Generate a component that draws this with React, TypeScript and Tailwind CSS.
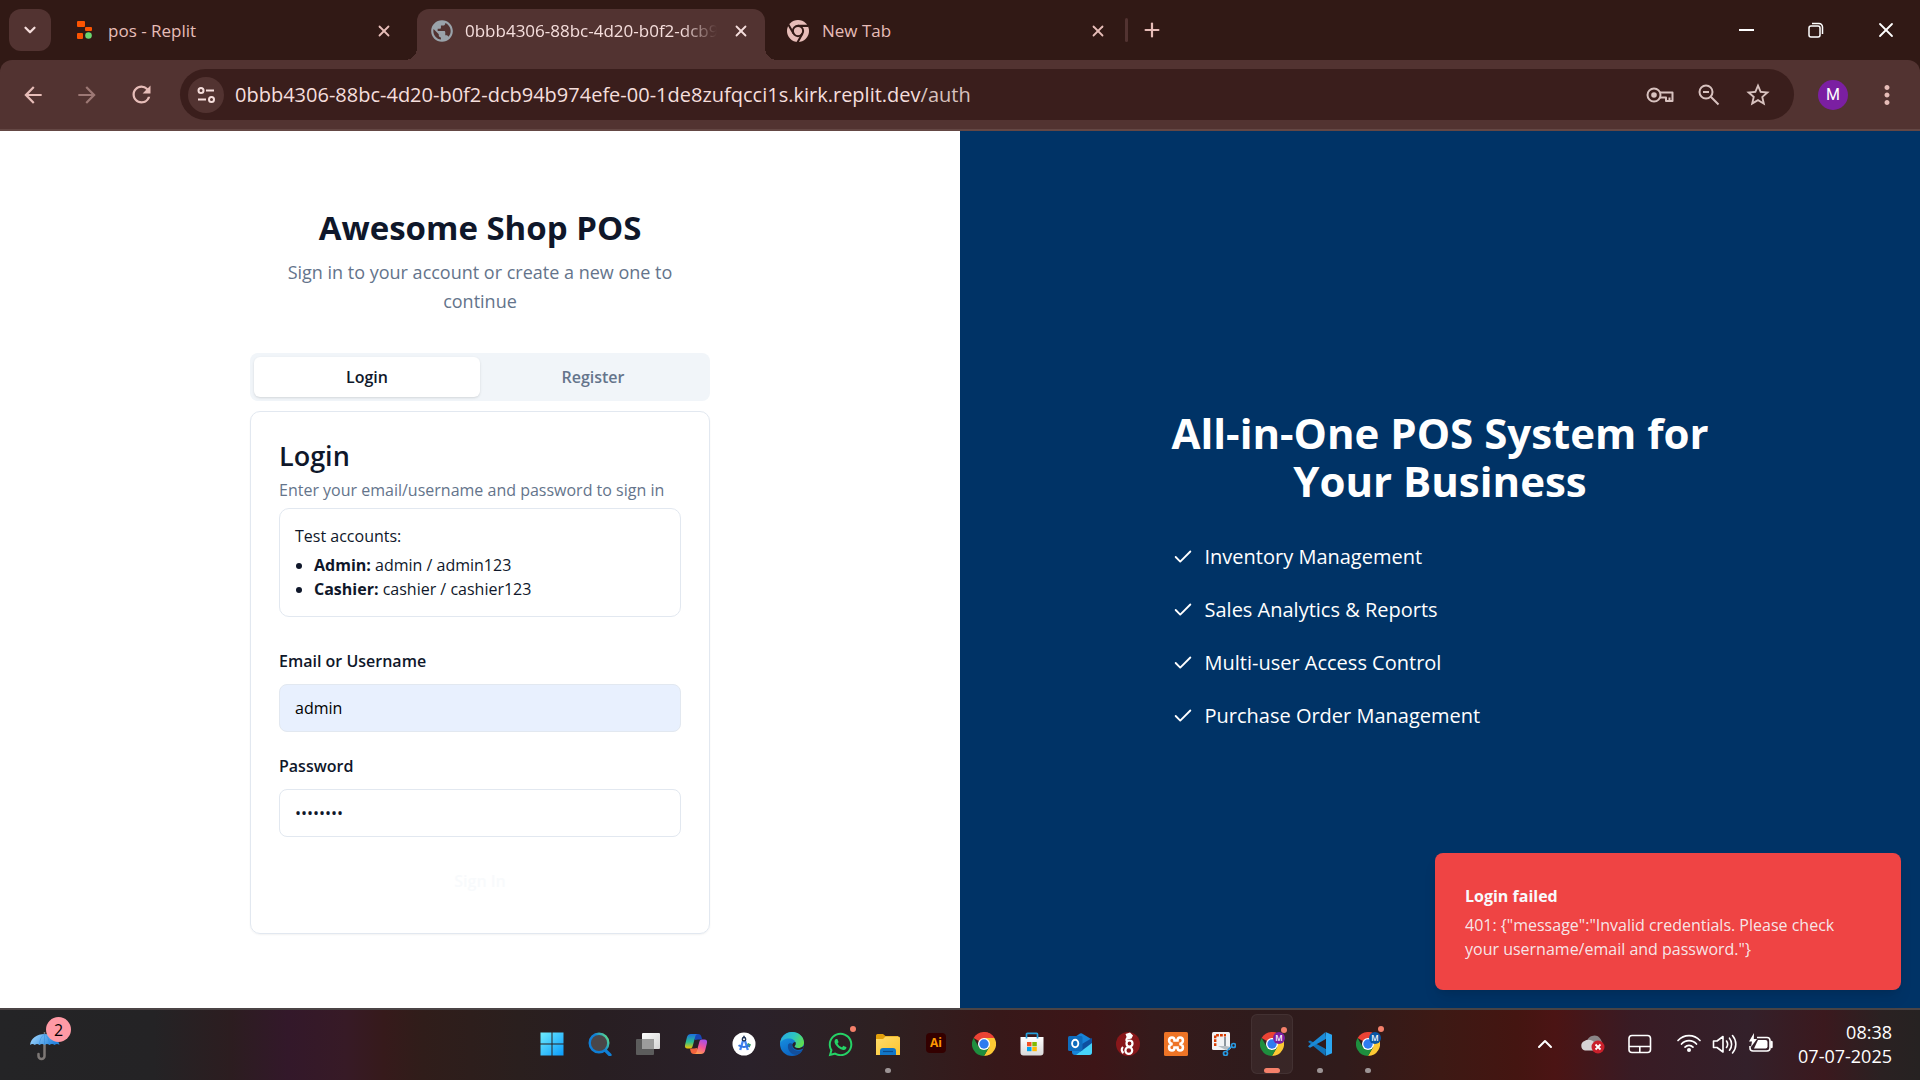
import React, { useId } from "react";
import {
  MdArrowBack,
  MdArrowForward,
  MdRefresh,
  MdPublic,
  MdStarBorder,
  MdMoreVert,
} from "react-icons/md";
import { FaWhatsapp } from "react-icons/fa";
import { Check, ChevronDown, ChevronUp, Plus, X } from "lucide-react";

/* ---------- Browser icons ---------- */

function ReplitIcon() {
  return (
    <svg width="16" height="20" viewBox="0 0 16 20" aria-hidden="true">
      <rect x="0" y="0" width="8" height="6" rx="1" fill="#fd5402" />
      <rect x="8" y="6" width="7" height="4" rx="1" fill="#fd5402" />
      <rect x="0" y="12" width="6" height="6" rx="1" fill="#fd5402" />
      <circle cx="11.5" cy="14.5" r="3.3" fill="#6bd66f" />
    </svg>
  );
}

function ChromeMono() {
  return (
    <svg width="22" height="22" viewBox="0 0 24 24" fill="none" aria-hidden="true">
      <circle cx="12" cy="12" r="12" fill="#e7bdb8" />
      <g stroke="#311915" strokeWidth="2.2">
        <circle cx="12" cy="12" r="5.6" />
        <path d="M12 6.4h11M7.1 14.8 1.6 5.3M16.9 14.8l-5.4 9.6" />
      </g>
      <circle cx="12" cy="12" r="3.6" fill="#e7bdb8" />
    </svg>
  );
}

function TuneIcon() {
  return (
    <svg width="20" height="20" viewBox="0 0 20 20" fill="none" stroke="#f5dedc" strokeWidth="2" aria-hidden="true">
      <circle cx="5" cy="5.5" r="2.5" />
      <path d="M10 5.5h8M2 14.5h8" />
      <circle cx="15.5" cy="14.5" r="2.5" />
    </svg>
  );
}

function KeyIcon() {
  return (
    <svg width="28" height="18" viewBox="0 0 28 18" fill="none" stroke="#d8c2bf" strokeWidth="2" aria-hidden="true">
      <path d="M14 6.5h12.5v8.5h-3v-3.5M14 11.5h6v3.5h3.5" strokeLinejoin="round" />
      <circle cx="8" cy="9" r="6.5" />
      <circle cx="8" cy="9" r="2.8" fill="#d8c2bf" stroke="none" />
    </svg>
  );
}

function ZoomOutIcon() {
  return (
    <svg width="22" height="22" viewBox="0 0 22 22" fill="none" stroke="#d8c2bf" strokeWidth="2" aria-hidden="true">
      <circle cx="8" cy="8" r="6.5" />
      <path d="M5 8h6M12.8 12.8l7.7 7.7" />
    </svg>
  );
}

function RestoreIcon() {
  return (
    <svg width="16" height="16" viewBox="0 0 16 16" fill="none" stroke="#fff" strokeWidth="1.5" aria-hidden="true">
      <rect x="1" y="4" width="11" height="11" rx="2" />
      <path d="M4 1.5h7a3.5 3.5 0 0 1 3.5 3.5v7" />
    </svg>
  );
}

/* ---------- Taskbar icons ---------- */

function WindowsIcon() {
  const id = useId();
  return (
    <svg width="24" height="24" viewBox="0 0 24 24" aria-hidden="true">
      <defs>
        <linearGradient id={id} x1="0" y1="0" x2="1" y2="1" gradientUnits="objectBoundingBox">
          <stop offset="0" stopColor="#6fecfd" />
          <stop offset="1" stopColor="#0a9bfb" />
        </linearGradient>
      </defs>
      <path fill={`url(#${id})`} d="M.5.5h11v11H.5zM12.5.5h11v11h-11zM.5 12.5h11v11H.5zM12.5 12.5h11v11h-11z" />
    </svg>
  );
}

function SearchAppIcon() {
  const id = useId();
  return (
    <svg width="24" height="24" viewBox="0 0 24 24" fill="none" aria-hidden="true">
      <defs>
        <linearGradient id={id} x1="4" y1="14" x2="20" y2="4" gradientUnits="userSpaceOnUse">
          <stop offset="0.45" stopColor="#0f7fd6" />
          <stop offset="1" stopColor="#5fe08a" />
        </linearGradient>
      </defs>
      <path d="m17 18 5 5" stroke="#0f7fd6" strokeWidth="3.2" strokeLinecap="round" />
      <circle cx="11" cy="11" r="9.3" fill="#4a4648" stroke={`url(#${id})`} strokeWidth="2.4" />
    </svg>
  );
}

function TaskViewIcon() {
  const id = useId();
  return (
    <svg width="24" height="24" viewBox="0 0 24 24" aria-hidden="true">
      <defs>
        <linearGradient id={id} x1="0" y1="0" x2="1" y2="1">
          <stop offset="0" stopColor="#fdfdfd" />
          <stop offset="1" stopColor="#d4d4d4" />
        </linearGradient>
      </defs>
      <rect x="0" y="7" width="18" height="16" rx="1" fill="#5c5c5c" />
      <rect x="6" y="1" width="18" height="16" rx="1" fill={`url(#${id})`} />
      <path d="M6 7h12v10H6z" fill="#9c9c9c" />
    </svg>
  );
}

function CopilotIcon() {
  const id = useId();
  return (
    <svg width="24" height="24" viewBox="0 0 24 24" aria-hidden="true">
      <defs>
        <linearGradient id={`${id}a`} x1="0" y1="0" x2="0" y2="1">
          <stop offset="0" stopColor="#1c6fe0" />
          <stop offset="0.55" stopColor="#2cbf8f" />
          <stop offset="1" stopColor="#f5c400" />
        </linearGradient>
        <linearGradient id={`${id}b`} x1="0.7" y1="0" x2="0.3" y2="1">
          <stop offset="0" stopColor="#a64fe8" />
          <stop offset="0.5" stopColor="#f3559a" />
          <stop offset="1" stopColor="#ffa04c" />
        </linearGradient>
      </defs>
      <path d="M8 2h6c2 0 3 1 3.500 3l.7 2.500H14L11 8z" fill="#1746b8" />
      <path d="M16 22h-6c-2 0-3-1-3.500-3L6 16.500h4L13 16z" fill="#f2643d" />
      <path fill={`url(#${id}a)`} d="M7 2h7c-1.500 0-2.300 1-2.800 2.700L8.700 14c-.5 1.800-1.400 2.500-3 2.500H3.500C1.300 16.500.5 15 1.100 12.800L3 5c.6-2 2-3 4-3z" />
      <path fill={`url(#${id}b)`} d="M17 22h-7c1.500 0 2.300-1 2.800-2.700L15.300 10c.5-1.800 1.400-2.500 3-2.500h2.200c2.200 0 3 1.500 2.400 3.700L21 19c-.6 2-2 3-4 3z" />
    </svg>
  );
}

function AndroidStudioIcon() {
  return (
    <svg width="24" height="24" viewBox="0 0 24 24" fill="none" aria-hidden="true">
      <circle cx="12" cy="12" r="11.5" fill="#fff" />
      <path d="m16 11 3 1.500-1.500 3-3-2z" fill="#2f9e54" />
      <path d="m11.200 8-3 10M12.800 8l3 10" stroke="#4285f4" strokeWidth="2.300" />
      <path d="M6.500 13.300c3 2.200 8 2.200 11-.3" stroke="#3474e0" strokeWidth="2" />
      <circle cx="12" cy="7.200" r="1.700" fill="#fff" stroke="#1c3154" strokeWidth="1.400" />
      <path d="M12 3.800v2" stroke="#1c3154" strokeWidth="1.500" />
    </svg>
  );
}

function EdgeIcon() {
  const id = useId();
  return (
    <svg width="24" height="24" viewBox="0 0 24 24" aria-hidden="true">
      <defs>
        <linearGradient id={`${id}a`} x1="0" y1="0.2" x2="1" y2="0.6">
          <stop offset="0" stopColor="#2aa9e0" />
          <stop offset="0.5" stopColor="#2cc4c4" />
          <stop offset="1" stopColor="#5fdf4e" />
        </linearGradient>
        <linearGradient id={`${id}b`} x1="0" y1="0" x2="0.5" y2="1">
          <stop offset="0" stopColor="#1a9be8" />
          <stop offset="1" stopColor="#0b62c0" />
        </linearGradient>
      </defs>
      <circle cx="12" cy="12" r="12" fill={`url(#${id}b)`} />
      <path d="M8 13c-1 6 4 10 9 10 3-1 4.500-3 5.500-5-3 2-8 1-9.500-2-1-1.500-.5-3 0-4-2-1-4.500-1-5 1z" fill="#124f9c" />
      <path d="M.2 11C1 4.500 6 0 12 0c7 0 12 5 12 10.500 0 3.500-2.500 5.500-5.500 5.500-2.500 0-4-.8-4-1.500s1.200-1 1.200-3C15.700 8.500 12.500 6.500 9 6.500 5 6.500 1.500 8.500.2 11z" fill={`url(#${id}a)`} />
      <path d="M14.500 14.500c0-.7 1.200-1 1.200-3 0-.5-.1-1-.3-1.500-1.800 0-3.200 1.700-3 3.600.2 2.200 2.600 4.400 5.600 4.400 2.200 0 4-.8 5-1.500L24 14l-3 1.500c-3 1.200-6.500.2-6.500-1z" fill="#292026" />
    </svg>
  );
}

function FolderIcon() {
  const id = useId();
  return (
    <svg width="24" height="24" viewBox="0 0 24 24" aria-hidden="true">
      <defs>
        <linearGradient id={id} x1="0" y1="0" x2="1" y2="1">
          <stop offset="0" stopColor="#ffdd6b" />
          <stop offset="1" stopColor="#fcc42f" />
        </linearGradient>
      </defs>
      <path d="M0 3.500A1.500 1.500 0 0 1 1.500 2H7l2.500 2H22v4H0z" fill="#e2a00b" />
      <path d="M0 7h7l2.500-2.500H22.500A1.500 1.500 0 0 1 24 6v17H0z" fill={`url(#${id})`} />
      <path d="M4 23v-4a3 3 0 0 1 3-3h10a3 3 0 0 1 3 3v4z" fill="#1177c8" />
      <path d="M7 19.500h10" stroke="#0a4c8c" strokeWidth="1.2" />
    </svg>
  );
}

function ChromeIcon() {
  return (
    <svg width="24" height="24" viewBox="0 0 24 24" aria-hidden="true">
      <path d="M12 12 1.600 6A12 12 0 0 1 22.400 6z" fill="#ea4335" />
      <path d="M12 0a12 12 0 0 1 10.400 6H12z" fill="#ea4335" />
      <path d="M12 6h10.400A12 12 0 0 1 12 24l5.200-9z" fill="#fcc934" />
      <path d="M6.800 15 1.600 6A12 12 0 0 0 12 24l5.200-9-5.200 3z" fill="#1e8e3e" />
      <circle cx="12" cy="12" r="6" fill="#fff" />
      <circle cx="12" cy="12" r="4.7" fill="#2f7bf0" />
    </svg>
  );
}

function ChromeProfile({ color }: { color: "purple" | "blue" }) {
  return (
    <span className="relative block">
      <ChromeIcon />
      <span
        className={`absolute -right-px top-0 flex size-3 items-center justify-center rounded-full text-[8px] font-semibold leading-none text-white ${
          color === "purple" ? "bg-[#7b1fa2]" : "bg-[#0b57a4]"
        }`}
      >
        M
      </span>
    </span>
  );
}

function StoreIcon() {
  const id = useId();
  return (
    <svg width="24" height="24" viewBox="0 0 24 24" aria-hidden="true">
      <defs>
        <linearGradient id={id} x1="0" y1="0" x2="0" y2="1">
          <stop offset="0" stopColor="#ffffff" />
          <stop offset="1" stopColor="#d9d9d9" />
        </linearGradient>
      </defs>
      <path d="M.5 5h23v15.500a3 3 0 0 1-3 3h-17a3 3 0 0 1-3-3z" fill={`url(#${id})`} />
      <path d="M6.500 6.500V2.200a.9.900 0 0 1 .9-.9h9.200a.9.900 0 0 1 .9.900v4.300" fill="none" stroke="#25a0dc" strokeWidth="1.7" />
      <path d="M7 10h4.500v4.300H7z" fill="#f25022" />
      <path d="M12.300 10h4.500v4.300h-4.500z" fill="#7fba00" />
      <path d="M7 15h4.500v4.200H7z" fill="#00a4ef" />
      <path d="M12.300 15h4.500v4.200h-4.500z" fill="#ffb900" />
    </svg>
  );
}

function OutlookIcon() {
  return (
    <svg width="24" height="24" viewBox="0 0 24 24" aria-hidden="true">
      <path d="M4 7 12 1.600a2 2 0 0 1 2 0L24 7.500V20a3 3 0 0 1-3 3H7a3 3 0 0 1-3-3z" fill="#1683d8" />
      <path d="m14 12 10-6v6L12 21z" fill="#0d4fa0" />
      <path d="M8 23 24 11v9a3 3 0 0 1-3 3z" fill="#47d3f8" />
      <rect x="0" y="4" width="14.5" height="15" rx="1.5" fill="#0f6cbd" />
      <ellipse cx="7.2" cy="11.5" rx="3.1" ry="3.7" fill="none" stroke="#fff" strokeWidth="1.9" />
    </svg>
  );
}

function DragonIcon() {
  return (
    <svg width="24" height="24" viewBox="0 0 24 24" fill="none" aria-hidden="true">
      <circle cx="12" cy="12" r="12" fill="#88171a" />
      <g stroke="#fff" strokeWidth="2.2">
        <circle cx="13.5" cy="11.5" r="3" />
        <circle cx="12.800" cy="18.500" r="3.400" />
        <path d="M7.500 21c-2-1.500-2.500-4-.5-6M10.500 9c-.5-2.500 1-4 4.500-4.500" />
      </g>
      <path d="m9.500 2 4.500-1.500 3 3-1.500 3-4 1z" fill="#fff" />
    </svg>
  );
}

function XamppIcon() {
  return (
    <svg width="24" height="24" viewBox="0 0 24 24" fill="none" aria-hidden="true">
      <rect width="24" height="24" rx="1.5" fill="#ee7426" />
      <path
        d="M8.500 12c-5-1-4-6.500-.5-6.500 2 0 2.500 1.500 2.500 3h3c0-1.500.5-3 2.500-3 3.500 0 4.500 5.500-.5 6.500 5 1 4 6.500.5 6.500-2 0-2.500-1.500-2.500-3h-3c0 1.500-.5 3-2.500 3-3.500 0-4.500-5.500.5-6.500z"
        stroke="#fff"
        strokeWidth="2.5"
      />
    </svg>
  );
}

function SnipIcon() {
  return (
    <svg width="24" height="24" viewBox="0 0 24 24" fill="none" aria-hidden="true">
      <rect width="18" height="18" rx="1.5" fill="#f1f3f5" />
      <path d="M3.200 14V3.200H14" stroke="#d83b01" strokeWidth="2.4" strokeDasharray="2.8 1.1" />
      <path d="M13 5v11h6" stroke="#8d979f" strokeWidth="2" />
      <path d="M6 14h8l5 1-5 3z" fill="#b4bcc2" />
      <circle cx="21.5" cy="13.5" r="2" stroke="#2899e0" strokeWidth="1.7" />
      <circle cx="13.5" cy="21.500" r="2" stroke="#2899e0" strokeWidth="1.7" />
      <path d="m19.500 14.500-5.200 5" stroke="#2899e0" strokeWidth="1.4" />
    </svg>
  );
}

function VSCodeIcon() {
  return (
    <svg width="24" height="24" viewBox="0 0 24 24" aria-hidden="true">
      <path d="M2 8.500.300 9.500V10L17.500 24 18 17z" fill="#1173b8" />
      <path d="M18 7 2 15.800l-1.700-1V14L17.500 0z" fill="#1b8ad6" />
      <path d="M17.500 0 24 2.800v18.400L17.500 24c.3 0 .5-.5.5-1V1c0-.5-.2-1-.5-1z" fill="#2ba7f2" />
      <path d="M18 6.800V17l-6.600-5z" fill="#301b1c" />
    </svg>
  );
}

function UmbrellaIcon() {
  const id = useId();
  return (
    <svg width="32" height="32" viewBox="0 0 32 32" fill="none" aria-hidden="true">
      <defs>
        <linearGradient id={id} x1="0" y1="0" x2="1" y2="0.3">
          <stop offset="0" stopColor="#a8dcff" />
          <stop offset="1" stopColor="#2484df" />
        </linearGradient>
      </defs>
      <path d="M14.500 12v14a3 3 0 0 1-6 0v-2" stroke="#7d7876" strokeWidth="2.5" strokeLinecap="round" />
      <path d="M14.500 2v4" stroke="#7d7876" strokeWidth="1.5" />
      <path d="M0 15C1 8 7 4 14.500 4S28 8 29.500 15q-2.500-2-5 0-2.500-2-5 0-2.500-2-5 0-2.500-2-5 0-2.500-2-4.700 0-2.300-2-4.800 0z" fill={`url(#${id})`} />
      <path d="M14.500 4c-3 2-5 6-5 11M14.500 4c3 2 5 6 5 11M14.500 4v11" stroke="#2f86d8" strokeWidth="0.8" opacity="0.6" />
    </svg>
  );
}

function CloudErrorIcon() {
  return (
    <svg width="26" height="22" viewBox="0 0 26 22" fill="none" aria-hidden="true">
      <path d="M7 8a7.500 7.500 0 0 1 13.500-2L22 9 12 14z" fill="#8b8587" />
      <path d="M5 17.500A5 5 0 0 1 4.500 8C8 5.500 13 7 16 11l4 6.500z" fill="#d7d3d5" />
      <circle cx="18" cy="14" r="6.5" fill="#c9202b" />
      <path d="m15.500 11.500 5 5m0-5-5 5" stroke="#fff" strokeWidth="1.8" />
    </svg>
  );
}

function TouchpadIcon() {
  return (
    <svg width="24" height="20" viewBox="0 0 24 20" fill="none" stroke="#fff" strokeWidth="1.6" aria-hidden="true">
      <rect x="1" y="1.5" width="21.5" height="17" rx="3" />
      <path d="M1 12.500h21.500M11.800 12.500v6" />
    </svg>
  );
}

function WifiIcon() {
  return (
    <svg width="26" height="20" viewBox="0 0 26 20" fill="none" stroke="#fff" strokeWidth="1.7" strokeLinecap="round" aria-hidden="true">
      <path d="M2 7.500c6-6.500 16-6.500 22 0M5.500 11c4-4.500 11-4.500 15 0M9 14.200c2.300-2.500 5.700-2.500 8 0" />
      <circle cx="13" cy="17" r="2" fill="#fff" stroke="none" />
    </svg>
  );
}

function VolumeIcon() {
  return (
    <svg width="26" height="22" viewBox="0 0 26 22" fill="none" stroke="#fff" strokeWidth="1.6" strokeLinecap="round" strokeLinejoin="round" aria-hidden="true">
      <path d="M1.500 8v6.500H5l6 4.500V3.500L5 8z" />
      <path d="M14.500 8c1.400 2 1.400 4.500 0 6.500M17.500 5.200c2.800 3.500 2.800 8.500 0 12M20.500 2.500c4.400 5 4.400 12.500 0 17.500" />
    </svg>
  );
}

function BatteryIcon() {
  return (
    <svg width="26" height="22" viewBox="0 0 26 22" fill="none" stroke="#fff" strokeWidth="1.6" aria-hidden="true">
      <path d="M9 4.500h10a3 3 0 0 1 3 3V15a3 3 0 0 1-3 3H5a3 3 0 0 1-3-3v-2" />
      <path d="M23.500 9v5" strokeWidth="2.4" strokeLinecap="round" />
      <path d="M10 7h7.500a2 2 0 0 1 2 2v4.500a2 2 0 0 1-2 2H6z" fill="#fff" stroke="none" />
      <path d="M6 0 1 8.500h3L3 14l6-8H5.800z" fill="#fff" stroke="none" />
    </svg>
  );
}

/* ---------- Browser chrome ---------- */

function TabClose({ label, className = "text-[#e7bdb8]" }: { label: string; className?: string }) {
  return (
    <button aria-label={label} className={`flex size-6 shrink-0 items-center justify-center ${className}`}>
      <X size={18} strokeWidth={2.4} />
    </button>
  );
}

function TabStrip() {
  return (
    <div className="flex h-[60px] items-end text-[17px] text-[#e7bdb8]">
      <button aria-label="Search tabs" className="mb-[9px] ml-[9px] flex size-[42px] shrink-0 items-center justify-center rounded-xl bg-[#523331] text-[#f5dedc]">
        <ChevronDown size={18} strokeWidth={3} />
      </button>
      <div className="flex h-[51px] w-[366px] items-center pb-2 pl-[26px] pr-[21px]">
        <ReplitIcon />
        <span className="ml-[15px] flex-1 truncate">pos - Replit</span>
        <TabClose label="Close pos - Replit" />
      </div>
      <div className="relative flex h-[51px] w-[348px] items-center rounded-t-xl bg-[#523331] px-3 pb-2 text-[#f5dedc]">
        <span className="absolute -left-3 bottom-0 size-3 bg-[radial-gradient(circle_at_0_0,transparent_12px,#523331_12px)]" />
        <span className="absolute -right-3 bottom-0 size-3 bg-[radial-gradient(circle_at_100%_0,transparent_12px,#523331_12px)]" />
        <MdPublic size={26} className="shrink-0 text-[#9aa3aa]" />
        <span className="ml-[10px] flex-1 overflow-hidden whitespace-nowrap [mask-image:linear-gradient(to_right,black_86%,transparent)]">
          0bbb4306-88bc-4d20-b0f2-dcb94b974efe
        </span>
        <TabClose label="Close current tab" className="ml-3 text-[#f5dedc]" />
      </div>
      <div className="flex h-[51px] w-[360px] items-center pb-2 pl-[22px] pr-[15px]">
        <ChromeMono />
        <span className="ml-[13px] flex-1 truncate">New Tab</span>
        <TabClose label="Close New Tab" />
      </div>
      <span className="mb-[18px] h-6 w-[3px] rounded bg-[#523331]" />
      <button aria-label="New tab" className="mb-[18px] ml-3 flex size-6 items-center justify-center">
        <Plus size={22} strokeWidth={2.4} />
      </button>
      <div className="ml-auto flex h-[60px] items-stretch text-white">
        <button aria-label="Minimize" className="flex w-[69px] items-center justify-center">
          <span className="h-[2px] w-[15px] bg-white" />
        </button>
        <button aria-label="Restore" className="flex w-[70px] items-center justify-center">
          <RestoreIcon />
        </button>
        <button aria-label="Close window" className="flex w-[69px] items-center justify-center">
          <X size={24} strokeWidth={1.8} />
        </button>
      </div>
    </div>
  );
}

function Toolbar() {
  return (
    <div className="flex h-[71px] items-center rounded-t-xl border-b-2 border-[#644744] bg-[#523331] pl-5 text-[#e7bdb8]">
      <div className="flex gap-7">
        <button aria-label="Back">
          <MdArrowBack size={26} />
        </button>
        <button aria-label="Forward" className="opacity-50">
          <MdArrowForward size={26} />
        </button>
        <button aria-label="Reload">
          <MdRefresh size={27} />
        </button>
      </div>
      <div className="ml-[25px] flex h-[51px] flex-1 items-center rounded-full bg-[#3a1e1c] pl-2 pr-[22px]">
        <button aria-label="View site information" className="flex size-9 shrink-0 items-center justify-center rounded-full bg-[#523331]">
          <TuneIcon />
        </button>
        <p className="ml-[11px] flex-1 truncate text-[20px] text-[#f5dedc]">
          0bbb4306-88bc-4d20-b0f2-dcb94b974efe-00-1de8zufqcci1s.kirk.replit.dev<span className="text-[#d8c2bf]">/auth</span>
        </p>
        <div className="flex items-center gap-6 text-[#d8c2bf]">
          <button aria-label="Manage passwords">
            <KeyIcon />
          </button>
          <button aria-label="Zoom">
            <ZoomOutIcon />
          </button>
          <button aria-label="Bookmark this tab">
            <MdStarBorder size={28} />
          </button>
        </div>
      </div>
      <button aria-label="Profile" className="ml-6 flex size-[30px] items-center justify-center rounded-full bg-[#7b1fa2] font-['Roboto',sans-serif] text-[16px] text-white">
        M
      </button>
      <button aria-label="Menu" className="ml-6 mr-[18px]">
        <MdMoreVert size={30} />
      </button>
    </div>
  );
}

/* ---------- Page ---------- */

function LoginPanel() {
  return (
    <section className="flex flex-1 flex-col items-center justify-center bg-white text-[#0f172a]">
      <div className="w-[460px]">
        <h1 className="text-center text-[33px] font-bold leading-[44px]">Awesome Shop POS</h1>
        <p className="mt-2 px-4 text-center text-[18px] leading-[29px] text-[#64748b]">
          Sign in to your account or create a new one to continue
        </p>
        <div role="tablist" className="mt-[37px] grid h-12 grid-cols-2 rounded-lg bg-[#f1f5f9] p-1 text-[16px] font-semibold">
          <button role="tab" aria-selected="true" className="rounded-md bg-white pt-px shadow-sm">
            Login
          </button>
          <button role="tab" aria-selected="false" className="pt-px text-[#64748b]">
            Register
          </button>
        </div>
        <form className="mt-[10px] rounded-[10px] border border-[#e2e8f0] px-7 pb-7 pt-[26px] shadow-xs" onSubmit={(e) => e.preventDefault()}>
          <h2 className="text-[27px] font-semibold leading-9">Login</h2>
          <p className="mt-1 whitespace-nowrap text-[16px] leading-6 text-[#64748b]">Enter your email/username and password to sign in</p>
          <div className="mt-[6px] rounded-[10px] border border-[#e2e8f0] p-[15px] text-[16px] leading-6">
            <p className="mb-[5px]">Test accounts:</p>
            <ul className="list-disc pl-[19px]">
              <li>
                <strong>Admin:</strong> admin / admin123
              </li>
              <li>
                <strong>Cashier:</strong> cashier / cashier123
              </li>
            </ul>
          </div>
          <label htmlFor="username" className="mt-8 block text-[16px] font-semibold leading-6">
            Email or Username
          </label>
          <input
            id="username"
            type="text"
            defaultValue="admin"
            className="mt-[11px] h-12 w-full rounded-lg border border-[#e2e8f0] bg-[#e8f0fe] px-[15px] text-[16px] text-black"
          />
          <label htmlFor="password" className="mt-[22px] block text-[16px] font-semibold leading-6">
            Password
          </label>
          <input
            id="password"
            type="password"
            defaultValue="admin123"
            className="mt-[11px] h-12 w-full rounded-lg border border-[#e2e8f0] px-[15px] text-[16px]"
          />
          <button type="submit" className="mt-5 h-12 w-full rounded-lg text-[16px] font-semibold text-[#f8fafc]">
            Sign In
          </button>
        </form>
      </div>
    </section>
  );
}

const features = ["Inventory Management", "Sales Analytics & Reports", "Multi-user Access Control", "Purchase Order Management"];

function HeroPanel() {
  return (
    <section className="relative flex flex-1 flex-col items-center justify-center bg-[#003366] text-white">
      <div className="w-[537px] pt-[2px]">
        <h2 className="whitespace-nowrap text-center text-[42px] font-bold leading-[48px]">
          All-in-One POS System for
          <br />
          Your Business
        </h2>
        <ul className="mt-[35px] flex flex-col gap-[19px] text-[20px] leading-[34px]">
          {features.map((f) => (
            <li key={f} className="flex items-center gap-[11px]">
              <Check size={22} strokeWidth={2} />
              {f}
            </li>
          ))}
        </ul>
      </div>
      <div role="alert" className="absolute bottom-[18px] right-[19px] w-[466px] rounded-lg bg-[#ef4444] pb-[25px] pl-[30px] pr-9 pt-[31px] shadow-lg">
        <p className="text-[16px] font-bold leading-6 text-[#f8fafc]">Login failed</p>
        <p className="mt-[5px] pb-1 text-[16px] leading-6 text-[#f8fafc]/90">
          401: {'{"message":"Invalid credentials. Please check your username/email and password."}'}
        </p>
      </div>
    </section>
  );
}

/* ---------- Taskbar ---------- */

type TaskbarApp = { name: string; icon: React.ReactNode; state?: "open" | "active"; alert?: boolean };

const apps: TaskbarApp[] = [
  { name: "Start", icon: <WindowsIcon /> },
  { name: "Search", icon: <SearchAppIcon /> },
  { name: "Task View", icon: <TaskViewIcon /> },
  { name: "Copilot", icon: <CopilotIcon /> },
  { name: "Android Studio", icon: <AndroidStudioIcon /> },
  { name: "Edge", icon: <EdgeIcon /> },
  { name: "WhatsApp", icon: <FaWhatsapp size={27} color="#25d366" />, alert: true },
  { name: "File Explorer", icon: <FolderIcon />, state: "open" },
  {
    name: "Illustrator",
    icon: (
      <span className="mb-[3px] flex size-5 items-center justify-center rounded bg-[#330000] text-[12px] font-bold leading-none text-[#ff9a00]">Ai</span>
    ),
  },
  { name: "Chrome", icon: <ChromeIcon /> },
  { name: "Microsoft Store", icon: <StoreIcon /> },
  { name: "Outlook", icon: <OutlookIcon /> },
  { name: "Dragon", icon: <DragonIcon /> },
  { name: "XAMPP", icon: <XamppIcon /> },
  { name: "Snipping Tool", icon: <SnipIcon /> },
  { name: "Chrome profile 1", icon: <ChromeProfile color="purple" />, state: "active", alert: true },
  { name: "Visual Studio Code", icon: <VSCodeIcon />, state: "open" },
  { name: "Chrome profile 2", icon: <ChromeProfile color="blue" />, state: "open", alert: true },
];

function Taskbar() {
  return (
    <footer className="grid h-[72px] grid-cols-[1fr_auto_1fr] items-center border-t-2 border-[#4b4445] bg-[linear-gradient(to_right,#242426_0%,#242325_8%,#2c1d20_12%,#33182a_15%,#371a26_18%,#361a1b_20%,#301d1a_22%,#2a1f1e_27%,#281e22_31%,#2a212a_39%,#2e2021_46%,#371819_52%,#3d1517_57%,#351a1b_60%,#2e1b1c_66%,#301b1b_70%,#3d1914_75%,#441511_79%,#4b1414_81%,#391b24_85%,#33202a_91%,#3b191e_95%,#2a2122_98%,#262222_100%)] pb-[2px] text-white">
      <button aria-label="Weather" className="relative ml-[30px] w-8 pt-1">
        <UmbrellaIcon />
        <span className="absolute -top-[9px] left-4 flex size-[25px] items-center justify-center rounded-full bg-[#ff9aa5] text-[16px] leading-none text-black">
          2
        </span>
      </button>
      <nav aria-label="Apps" className="flex">
        {apps.map((app) => (
          <div key={app.name} className="flex w-12 justify-center">
            <button
              aria-label={app.name}
              className={`relative flex h-[60px] w-[42px] items-center justify-center rounded-md ${
                app.state === "active" ? "border border-white/5 bg-white/5" : ""
              }`}
            >
              {app.icon}
              {app.alert && <span className="absolute right-[5px] top-3 size-[6px] rounded-full bg-[#f4806a]" />}
              {app.state === "open" && <span className="absolute bottom-px left-[18px] h-[5px] w-[6px] rounded-full bg-[#9c9495]" />}
              {app.state === "active" && <span className="absolute bottom-0 left-3 h-[5px] w-4 rounded-full bg-[#f4806a]" />}
            </button>
          </div>
        ))}
      </nav>
      <div className="mr-7 flex items-center justify-end">
        <button aria-label="Show hidden icons">
          <ChevronUp size={24} strokeWidth={2} />
        </button>
        <button aria-label="Cloud sync error" className="ml-[23px]">
          <CloudErrorIcon />
        </button>
        <button aria-label="Touchpad" className="ml-[22px]">
          <TouchpadIcon />
        </button>
        <div className="ml-6 flex gap-[10px]">
          <WifiIcon />
          <VolumeIcon />
          <BatteryIcon />
        </div>
        <div className="ml-6 text-right text-[18px] leading-6">
          <p>08:38</p>
          <p>07-07-2025</p>
        </div>
      </div>
    </footer>
  );
}

export default function App() {
  return (
    <div className="flex min-h-screen flex-col font-['Open_Sans','Noto_Sans',sans-serif]">
      <header className="bg-[#311915]">
        <TabStrip />
        <Toolbar />
      </header>
      <main className="flex flex-1">
        <LoginPanel />
        <HeroPanel />
      </main>
      <Taskbar />
    </div>
  );
}
